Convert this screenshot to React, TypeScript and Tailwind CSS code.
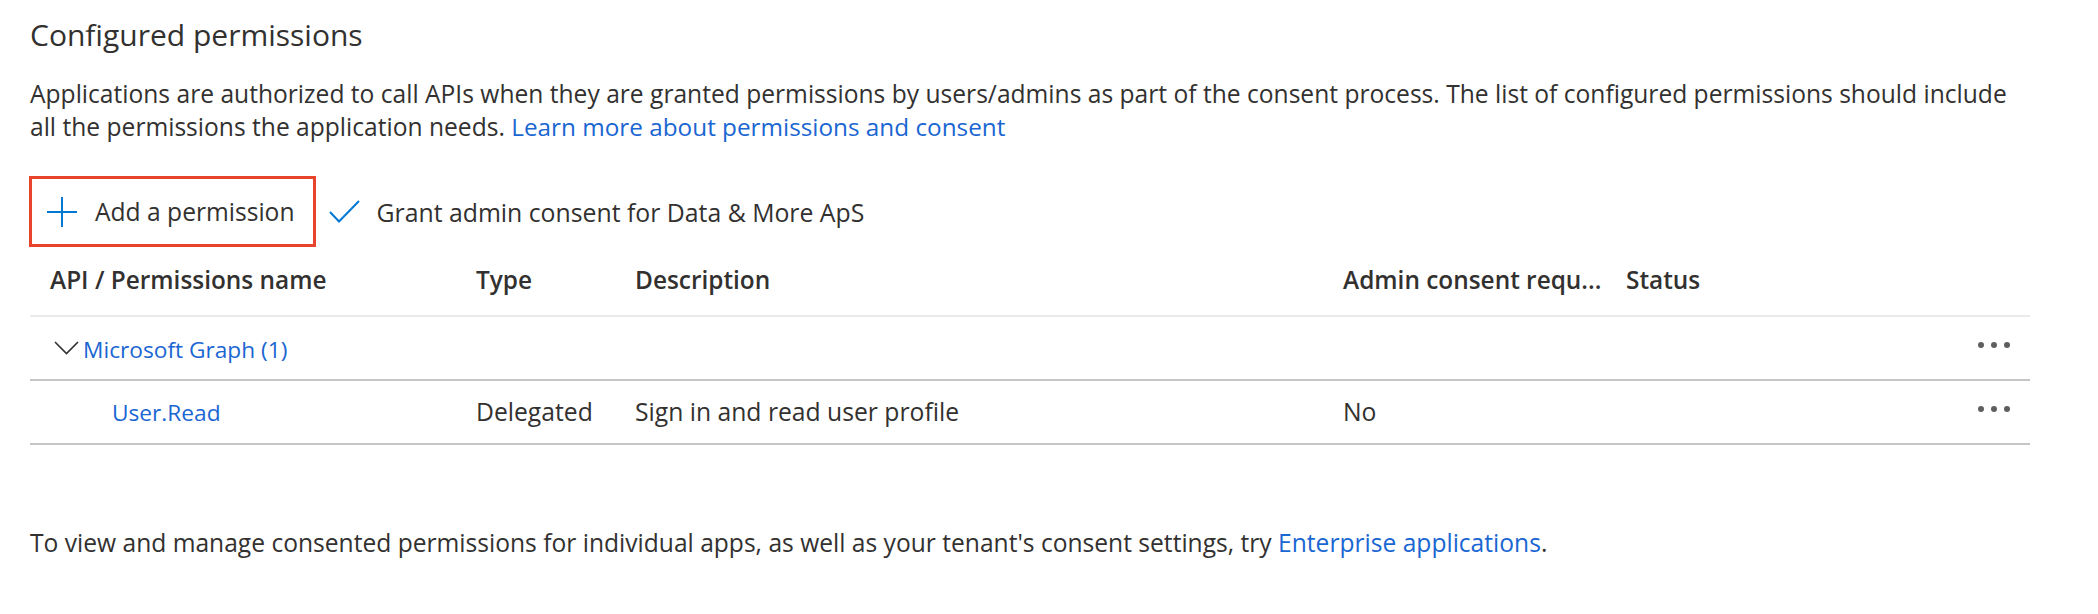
import React from "react";

const font = "font-['Open_Sans','Noto_Sans',sans-serif]";

function Dots() {
  return (
    <svg width="32" height="8" viewBox="0 0 32 8" className="block -translate-y-[3px]">
      <circle cx="3" cy="4" r="3" fill="#605e5c" />
      <circle cx="16" cy="4" r="3" fill="#605e5c" />
      <circle cx="29" cy="4" r="3" fill="#605e5c" />
    </svg>
  );
}

export default function App() {
  return (
    <div className={`${font} bg-white text-[#323130] w-[2098px] h-[614px] pl-[30px] pr-[68px] pt-[17px]`}>
      <h2 className="text-[30px] leading-[36px] font-normal whitespace-nowrap">Configured permissions</h2>

      <p className="mt-[24px] text-[24.6px] leading-[33px] whitespace-nowrap">
        Applications are authorized to call APIs when they are granted permissions by users/admins as part of the consent process. The list of configured permissions should include
        <br />
        all the permissions the application needs.{" "}
        <a className="text-[#1a66d2] text-[24.3px]">Learn more about permissions and consent</a>
      </p>

      <div className="mt-[33px] flex items-center">
        <div className="h-[71px] border-[3px] border-[#e8432b] flex items-center pl-[15px] pr-[18px] -ml-[1px]">
          <svg width="30" height="30" viewBox="0 0 30 30" className="block">
            <path d="M15 0 V30 M0 15 H30" stroke="#0078d4" strokeWidth="2" fill="none" />
          </svg>
          <span className="ml-[18px] text-[24.6px] leading-[32px]">Add a permission</span>
        </div>
        <svg width="31" height="23" viewBox="0 0 31 23" className="block ml-[13px]">
          <path d="M1 12 L10 21.5 L30 1" stroke="#0078d4" strokeWidth="2" fill="none" />
        </svg>
        <span className="ml-[17px] text-[24.8px] leading-[32px]">Grant admin consent for Data &amp; More ApS</span>
      </div>

      <div className="text-[24.7px] leading-[32px]">
        <div className="grid grid-cols-[446px_159px_708px_283px_1fr_60px] h-[70px] border-b-2 border-[#edebe9] pt-[17px] font-semibold text-[24.4px]">
          <div className="pl-[20px] whitespace-nowrap">API / Permissions name</div>
          <div>Type</div>
          <div>Description</div>
          <div className="whitespace-nowrap">Admin consent requ...</div>
          <div>Status</div>
          <div />
        </div>

        <div className="grid grid-cols-[446px_159px_708px_283px_1fr_60px] h-[64px] border-b-2 border-[#c8c6c4] items-center">
          <div className="pl-[24px] flex items-center whitespace-nowrap">
            <svg width="25" height="14" viewBox="0 0 25 14" className="block">
              <path d="M1 1 L12.5 12.5 L24 1" stroke="#323130" strokeWidth="1.6" fill="none" />
            </svg>
            <a className="ml-[4px] text-[#1a66d2] text-[22.7px] translate-y-[2px]">Microsoft Graph (1)</a>
          </div>
          <div />
          <div />
          <div />
          <div />
          <div className="flex justify-end pr-[20px]">
            <Dots />
          </div>
        </div>

        <div className="grid grid-cols-[446px_159px_708px_283px_1fr_60px] h-[64px] border-b-2 border-[#c8c6c4] items-center">
          <div className="pl-[82px]">
            <a className="text-[#1a66d2] text-[22.7px]">User.Read</a>
          </div>
          <div>Delegated</div>
          <div className="whitespace-nowrap">Sign in and read user profile</div>
          <div>No</div>
          <div />
          <div className="flex justify-end pr-[20px]">
            <Dots />
          </div>
        </div>
      </div>

      <p className="mt-[82px] text-[24.6px] leading-[32px] whitespace-nowrap">
        To view and manage consented permissions for individual apps, as well as your tenant's consent settings, try{" "}
        <a className="text-[#1a66d2]">Enterprise applications</a>.
      </p>
    </div>
  );
}
